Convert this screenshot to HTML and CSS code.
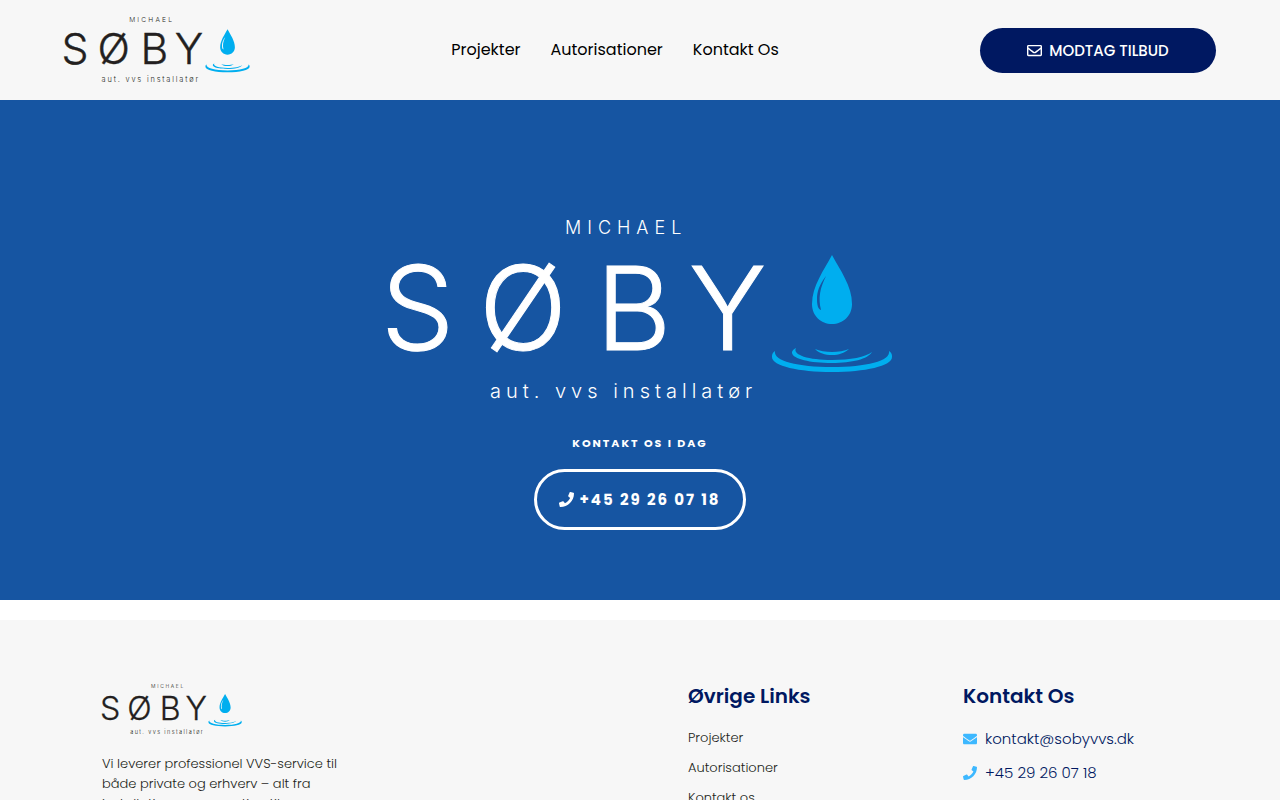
FILE: index.html
```html
<!DOCTYPE html>
<html lang="da">
<head>
<meta charset="utf-8">
<meta name="viewport" content="width=device-width, initial-scale=1">
<title>Michael Søby – aut. vvs installatør</title>
<link rel="stylesheet" href="styles.css">
</head>
<body>
<svg class="sprite" aria-hidden="true">
  <defs>
    <g id="water" fill-rule="evenodd">
      <path d="M444 36C452 51 464 67 464 85C464 97 455 105 444 105S424 97 424 85C424 67 436 51 444 36ZM438 57C431 66 429 73 429 80C429 86 430 90 433 91C430 79 432 69 438 57Z"/>
      <path d="M387 132C384 134 384 136 384 138C384 147 411 153 444 153S504 147 504 138C504 136 504 134 501 132C503 142 478 148 444 148S385 142 387 132Z"/>
      <path d="M408 129C404 131 404 133 404 134C405 140 422 144 444 144C464 144 480 140 484 133C478 138 462 141 444 141C421 141 404 136 408 129Z"/>
      <path d="M427 130C431 134 437 136 444 136S456 134 461 130C452 134 436 134 427 130Z"/>
    </g>
  </defs>
  <symbol id="phone" viewBox="0 0 512 512"><path d="M493.400 24.600l-104-24c-11.300-2.600-22.900 3.300-27.500 13.900l-48 112c-4.200 9.800-1.400 21.300 6.900 28l60.600 49.600c-36 76.700-98.900 140.500-177.200 177.200l-49.600-60.600c-6.800-8.300-18.200-11.100-28-6.900l-112 48C3.900 366.500-2 378.100.6 389.400l24 104C27.100 504.200 36.700 512 48 512c256.100 0 464-207.500 464-464 0-11.200-7.700-20.900-18.600-23.400z"/></symbol>
  <symbol id="mail-outline" viewBox="0 0 512 512"><path d="M464 64H48C21.500 64 0 85.500 0 112v288c0 26.500 21.500 48 48 48h416c26.500 0 48-21.500 48-48V112c0-26.500-21.500-48-48-48zm0 48v40.800c-22.400 18.300-58.200 46.700-134.600 106.500-16.800 13.200-50.200 45.100-73.400 44.700-23.200.4-56.600-31.500-73.400-44.700C106.200 199.500 70.400 171.100 48 152.800V112h416zM48 400V214.400c22.900 18.300 55.400 43.900 104.900 82.600 21.900 17.200 60.100 55.200 103.100 55 42.700.2 80.500-37.200 103.100-54.900 49.500-38.800 82-64.400 104.900-82.700V400H48z"/></symbol>
  <symbol id="mail" viewBox="0 0 512 512"><path d="M502.300 190.800c3.900-3.100 9.700-.2 9.700 4.700V400c0 26.500-21.500 48-48 48H48c-26.500 0-48-21.500-48-48V195.600c0-5 5.700-7.800 9.700-4.700 22.400 17.400 52.100 39.500 154.100 113.600 21.100 15.400 56.700 47.800 92.200 47.600 35.700.3 72-32.800 92.300-47.600 102-74.100 131.600-96.300 154-113.700zM256 320c23.200.4 56.600-29.200 73.400-41.400 132.700-96.300 142.800-104.700 173.400-128.700 5.800-4.500 9.200-11.500 9.200-18.900v-19c0-26.500-21.500-48-48-48H48c-26.500 0-48 21.500-48 48v19c0 7.400 3.400 14.300 9.200 18.900 30.600 23.900 40.700 32.400 173.400 128.700 16.800 12.200 50.200 41.800 73.400 41.400z"/></symbol>
</svg>

<header class="header">
  <a class="header-logo" href="#" aria-label="Forside">
    <svg class="logo" viewBox="0 0 505 182">
      <text class="logo-small" x="177" y="15">MICHAEL</text>
      <text class="logo-name" x="-7 91 208 301" y="131">SØBY</text>
      <text class="logo-tag" x="102" y="179">aut. vvs installatør</text>
      <use class="logo-water" href="#water"/>
    </svg>
  </a>
  <nav class="nav">
    <a href="#">Projekter</a>
    <a href="#">Autorisationer</a>
    <a href="#">Kontakt Os</a>
  </nav>
  <a class="quote" href="#"><svg class="icon"><use href="#mail-outline"/></svg>MODTAG TILBUD</a>
</header>

<main class="hero">
  <svg class="logo hero-logo" viewBox="0 0 505 182">
    <text class="logo-small" x="177" y="15">MICHAEL</text>
    <text class="logo-name" x="-7 91 208 301" y="131">SØBY</text>
    <text class="logo-tag" x="102" y="179">aut. vvs installatør</text>
    <use class="logo-water" href="#water"/>
  </svg>
  <p class="hero-label">KONTAKT OS I DAG</p>
  <a class="call" href="tel:+4529260718"><svg class="icon"><use href="#phone"/></svg>+45 29 26 07 18</a>
</main>

<footer class="footer">
  <section>
    <svg class="logo footer-logo" viewBox="0 0 505 182">
      <text class="logo-small" x="177" y="15">MICHAEL</text>
      <text class="logo-name" x="-7 91 208 301" y="131">SØBY</text>
      <text class="logo-tag" x="102" y="179">aut. vvs installatør</text>
      <use class="logo-water" href="#water"/>
    </svg>
    <p class="about">Vi leverer professionel VVS-service til både private og erhverv – alt fra installation og renovation til vedligeholdelse.</p>
  </section>
  <section>
    <h2>Øvrige Links</h2>
    <ul class="links">
      <li><a href="#">Projekter</a></li>
      <li><a href="#">Autorisationer</a></li>
      <li><a href="#">Kontakt os</a></li>
    </ul>
  </section>
  <section>
    <h2>Kontakt Os</h2>
    <ul class="contact">
      <li><a href="mailto:kontakt@sobyvvs.dk"><svg class="icon"><use href="#mail"/></svg>kontakt@sobyvvs.dk</a></li>
      <li><a href="tel:+4529260718"><svg class="icon"><use href="#phone"/></svg>+45 29 26 07 18</a></li>
    </ul>
  </section>
</footer>
</body>
</html>
```
FILE: styles.css
```css
* { box-sizing: border-box; }
body { margin: 0; background: #fff; color: #231f20; font-family: Poppins, Inter, sans-serif; }
a { color: inherit; text-decoration: none; }
ul, p, h2 { margin: 0; padding: 0; }
ul { list-style: none; }
.sprite { position: absolute; width: 0; height: 0; }
.icon { width: 15px; height: 15px; fill: currentColor; flex: none; }

.logo { display: block; width: 100%; overflow: visible; fill: currentColor; font-family: Inter, sans-serif; font-weight: 300; }
.logo-name { font-size: 116px; stroke: currentColor; stroke-width: 1px; }
.logo-small { font-size: 18px; letter-spacing: 6px; }
.logo-tag { font-size: 20px; letter-spacing: 5px; }
.logo-water { fill: #00aeef; }

.header { display: flex; align-items: center; justify-content: space-between; height: 100px; padding: 0 64px; background: #f7f7f7; }
.header-logo { width: 186px; }
.nav { display: flex; gap: 30px; color: #000; font-size: 16px; line-height: 24px; }
.quote { display: flex; align-items: center; justify-content: center; gap: 7px; width: 236px; height: 45px; border-radius: 23px; background: #001861; color: #fff; font-size: 15px; font-weight: 500; }

.hero { display: flex; flex-direction: column; align-items: center; height: 500px; padding-top: 119px; background: #1655a2; color: #fff; }
.hero-logo { width: 505px; }
.hero-label { margin-top: 34px; font-size: 11px; line-height: 16px; font-weight: 700; letter-spacing: 2px; }
.call { display: flex; align-items: center; gap: 5px; height: 61px; margin-top: 18px; padding: 0 22px; border: 3px solid #fff; border-radius: 31px; font-size: 15px; font-weight: 700; letter-spacing: 2px; }

.footer { display: grid; grid-template-columns: 586px 275px 1fr; margin-top: 20px; padding: 64px 102px; background: #f7f7f7; }
.footer-logo { width: 140px; }
.about { width: 260px; margin-top: 20px; font-size: 13px; line-height: 20px; font-weight: 300; }
h2 { color: #001861; font-size: 20px; line-height: 24px; font-weight: 600; }
.links { margin-top: 20px; font-size: 13px; line-height: 20px; font-weight: 300; }
.links li + li { margin-top: 10px; }
.contact { margin-top: 20px; color: #001861; font-size: 15px; line-height: 22px; font-weight: 300; }
.contact li + li { margin-top: 12px; }
.contact a { display: flex; align-items: center; gap: 8px; }
.contact .icon { width: 14px; height: 14px; color: #3db8ff; }
```
